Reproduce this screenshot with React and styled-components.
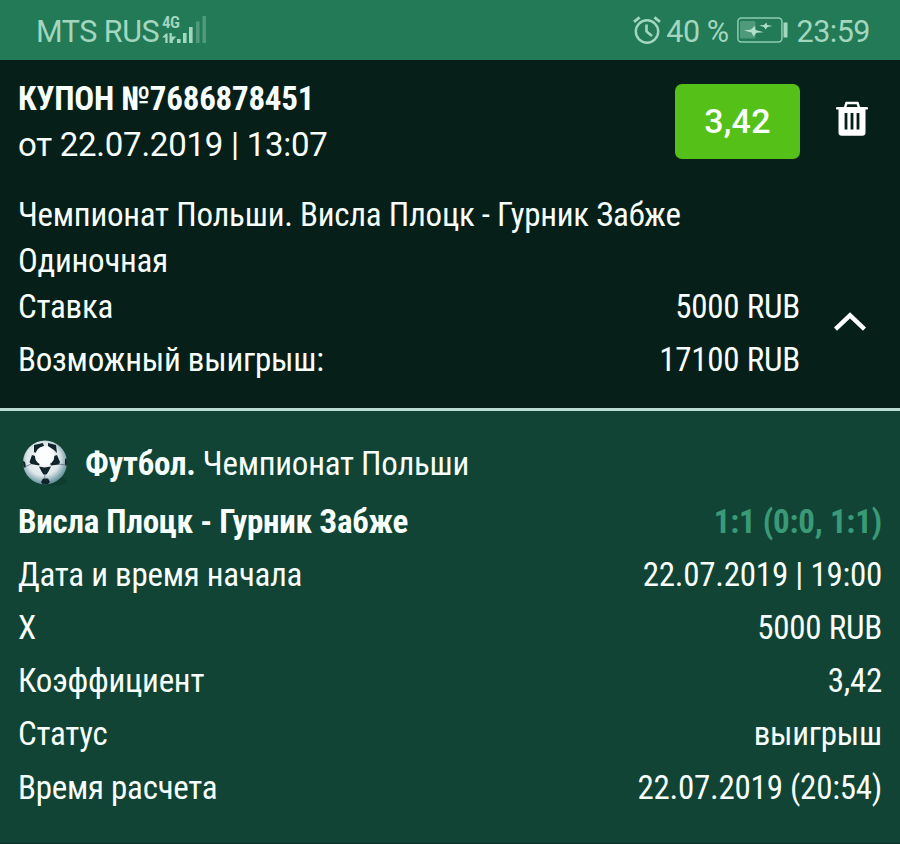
import React from "react";
import styled, { createGlobalStyle } from "styled-components";

const details = [
  { label: "Дата и время начала", value: "22.07.2019 | 19:00" },
  { label: "X", value: "5000 RUB" },
  { label: "Коэффициент", value: "3,42" },
  { label: "Статус", value: "выигрыш" },
  { label: "Время расчета", value: "22.07.2019 (20:54)" },
];

function SignalIcon() {
  return (
    <svg width="46" height="28" viewBox="0 0 46 28" fill="#a3d6bf">
      <path d="M0 21.5 4 17.500h1.600V27H3.300v-5.500zM7.500 17h2.300v3.500h4.500L10.800 24.500V27H7.500z" />
      <rect x="15" y="23" width="3.6" height="4" />
      <rect x="21" y="17" width="3.6" height="10" />
      <rect x="27" y="11" width="3.6" height="16" />
      <rect x="34" y="5.5" width="3.6" height="21.5" opacity="0.35" />
      <rect x="40.5" y="0" width="3.6" height="27" opacity="0.35" />
    </svg>
  );
}

function AlarmIcon() {
  return (
    <svg width="28" height="28" viewBox="0 0 28 28" fill="none" stroke="#a3d6bf">
      <circle cx="14" cy="15.5" r="11.2" strokeWidth="2.4" />
      <path d="M1 5.8 6.600 1.400M27 5.800 21.400 1.400" strokeWidth="2.8" />
      <path d="M13.500 8.500v7l5.500 4.500" strokeWidth="2.6" />
    </svg>
  );
}

function BatteryIcon() {
  return (
    <svg width="51" height="26" viewBox="0 0 51 26">
      <rect x="0.9" y="0.9" width="44" height="24" rx="3.5" fill="none" stroke="#8fccb0" strokeWidth="1.5" />
      <rect x="3" y="4" width="15.5" height="17.5" rx="1.5" fill="#4f9a79" />
      <rect x="46.5" y="5.5" width="4" height="15" fill="#a3d6bf" />
      <path d="M7 13.5 14 12.500 18 8.800 18.500 13 27 15.200 19.500 15.800 16.500 19.500 14.500 15.500z" fill="#b0dfca" />
      <path d="M22 8.500 27 8 29.500 5.500 30 8 35.500 9 30.500 10 28.500 12.500 27 10z" fill="#b0dfca" />
    </svg>
  );
}

function TrashIcon() {
  return (
    <svg width="32" height="36" viewBox="0 0 32 36">
      <path d="M9 6.5 10.500 2h11L23 6.500" fill="none" stroke="#fff" strokeWidth="2.4" />
      <rect x="0" y="6" width="32" height="2.6" rx="1.2" fill="#fff" />
      <path d="M2.500 8h27v23.500a3.200 3.200 0 0 1-3.200 3.200H5.700a3.200 3.200 0 0 1-3.200-3.200z" fill="#fff" />
      <path d="M10 12v16.500M16 12v16.500M22 12v16.500" stroke="#061f18" strokeWidth="2.8" />
    </svg>
  );
}

function ChevronIcon() {
  return (
    <svg width="32" height="20" viewBox="0 0 32 20">
      <path d="M1.500 17.200 16 3.400l14.500 13.800" fill="none" stroke="#fff" strokeWidth="4.400" />
    </svg>
  );
}

function BallIcon() {
  return (
    <svg width="48" height="48" viewBox="0 0 48 48">
      <defs>
        <radialGradient id="ball" cx="46%" cy="42%" r="58%">
          <stop offset="0" stopColor="#fff" />
          <stop offset="0.65" stopColor="#dde6ea" />
          <stop offset="1" stopColor="#5f8f98" />
        </radialGradient>
        <clipPath id="ballClip">
          <circle cx="24" cy="23.5" r="22" />
        </clipPath>
      </defs>
      <ellipse cx="32" cy="42" rx="14" ry="4.5" fill="#0b3329" opacity="0.5" />
      <circle cx="24" cy="23.5" r="22" fill="url(#ball)" />
      <g clipPath="url(#ballClip)" fill="#10252b">
        <path d="M13 6l9-2 1 3-5 2-3 5-2-1zM27 4l8 2 1 8-3-3-6-4z" />
        <path d="M11 16l3 1 1 4 4 3.500-1 2-8-1.500-1.500-2zM36 16l-3 1-1 4-3 3.500 1 2 8-1 1-2.500z" />
        <path d="M18 27.500l5.500 1 6.500-1-2.500 5-2 3h-3l-2-3zM20 43l2-3.500h5l2 3.500-3 3h-4zM1 21l3 2 1 5-3 1zM44 20l3-2v10l-3-2z" />
      </g>
      <circle cx="23.700" cy="17" r="9.700" fill="#fbfdff" />
      <path d="M23.800 35v5M10 25l-6 3M37.500 25l7 1" fill="none" stroke="#5c7178" strokeWidth="0.8" />
    </svg>
  );
}

function App() {
  return (
    <Page>
      <GlobalStyle />
      <StatusBar>
        <StatusGroup>
          <Carrier>MTS RUS</Carrier>
          <Network>
            <NetworkType>4G</NetworkType>
            <SignalIcon />
          </Network>
        </StatusGroup>
        <StatusGroup>
          <AlarmIcon />
          <Percent>40 %</Percent>
          <BatteryIcon />
          <Clock>23:59</Clock>
        </StatusGroup>
      </StatusBar>

      <Coupon>
        <CouponTop>
          <div>
            <CouponNumber>КУПОН №7686878451</CouponNumber>
            <CouponDate>от 22.07.2019 | 13:07</CouponDate>
          </div>
          <Odds>3,42</Odds>
          <IconButton aria-label="Удалить">
            <TrashIcon />
          </IconButton>
        </CouponTop>
        <CouponBody>
          <CouponInfo>
            <Line>Чемпионат Польши. Висла Плоцк - Гурник Забже</Line>
            <Line>Одиночная</Line>
            <Line>
              <span>Ставка</span>
              <span>5000 RUB</span>
            </Line>
            <Line $gap={7}>
              <span>Возможный выигрыш:</span>
              <span>17100 RUB</span>
            </Line>
          </CouponInfo>
          <Toggle aria-label="Свернуть">
            <ChevronIcon />
          </Toggle>
        </CouponBody>
      </Coupon>

      <Event>
        <Sport>
          <BallIcon />
          <SportName>
            <b>Футбол.</b> Чемпионат Польши
          </SportName>
        </Sport>
        <Row $bold>
          <span>Висла Плоцк - Гурник Забже</span>
          <Score>1:1 (0:0, 1:1)</Score>
        </Row>
        {details.map((item) => (
          <Row key={item.label}>
            <span>{item.label}</span>
            <span>{item.value}</span>
          </Row>
        ))}
      </Event>
    </Page>
  );
}

export default App;

const GlobalStyle = createGlobalStyle`
  * {
    box-sizing: border-box;
  }

  body {
    margin: 0;
    background: #114435;
  }
`;

const Page = styled.div`
  height: 844px;
  overflow: hidden;
  display: flex;
  flex-direction: column;
  color: #f8fffc;
  background: #114435;
  font-family: "Roboto Condensed", Roboto, "Liberation Sans", sans-serif;
  font-stretch: 75%;
  font-size: 33px;
  letter-spacing: -0.25px;
  white-space: nowrap;
`;

const StatusBar = styled.header`
  height: 60px;
  padding: 0 30px 0 36px;
  display: flex;
  justify-content: space-between;
  background: #227a57;
  color: #a3d6bf;
  font-family: Roboto, sans-serif;
  font-stretch: 100%;
  font-size: 30.5px;
  letter-spacing: -0.5px;
`;

const StatusGroup = styled.div`
  display: flex;
  align-items: center;
`;

const Carrier = styled.span`
  line-height: 60px;
  padding-top: 3px;
`;

const Network = styled.div`
  position: relative;
  width: 46px;
  height: 28px;
  margin-left: 3px;

  svg {
    display: block;
  }
`;

const NetworkType = styled.span`
  position: absolute;
  left: 0;
  top: -2px;
  font-size: 17px;
  font-weight: 600;
  font-stretch: 75%;
  line-height: 17px;
  letter-spacing: -0.5px;
`;

const Percent = styled.span`
  margin: 0 8px 0 5px;
  padding-top: 3px;
  line-height: 60px;
`;

const Clock = styled.span`
  margin-left: 9px;
  padding-top: 3px;
  line-height: 60px;
`;

const Coupon = styled.section`
  height: 351px;
  padding: 15px 0 0 18px;
  background: #061f18;
  border-bottom: 3px solid #b9ddd0;
`;

const CouponTop = styled.div`
  height: 117px;
  display: grid;
  grid-template-columns: 1fr 125px 100px;
  align-items: start;
`;

const CouponNumber = styled.div`
  padding-top: 1px;
  line-height: 46px;
  font-weight: 700;
`;

const CouponDate = styled.div`
  line-height: 46px;
  font-family: Roboto, sans-serif;
  font-stretch: 100%;
`;

const Odds = styled.div`
  height: 75px;
  margin-top: 9px;
  border-radius: 7px;
  background: #55c118;
  font-family: Roboto, sans-serif;
  font-stretch: 100%;
  font-size: 34px;
  font-weight: 500;
  letter-spacing: 0.2px;
  line-height: 74px;
  text-align: center;
`;

const IconButton = styled.button`
  height: 75px;
  margin-top: 6px;
  padding: 0 0 0 4px;
  border: none;
  background: none;
  display: flex;
  align-items: center;
  justify-content: center;
`;

const CouponBody = styled.div`
  display: grid;
  grid-template-columns: 1fr 100px;
`;

const CouponInfo = styled.div`
  min-width: 0;
`;

const Line = styled.div`
  display: flex;
  justify-content: space-between;
  line-height: 46px;
  margin-top: ${(props) => props.$gap || 0}px;
`;

const Toggle = styled.button`
  align-self: end;
  height: 120px;
  border: none;
  background: none;
  padding: 0;
`;

const Event = styled.section`
  flex: 1;
  padding: 23px 18px 0;
  border-bottom: 1px solid #0b3027;
`;

const Sport = styled.div`
  height: 60.5px;
  padding: 0 0 2px 3px;
  display: flex;
  align-items: center;
  gap: 16px;
`;

const SportName = styled.div`
  line-height: 53px;
`;

const Row = styled.div`
  display: flex;
  justify-content: space-between;
  line-height: 53.2px;
  font-weight: ${(props) => (props.$bold ? 700 : 400)};
`;

const Score = styled.span`
  color: #3a9a78;
`;
